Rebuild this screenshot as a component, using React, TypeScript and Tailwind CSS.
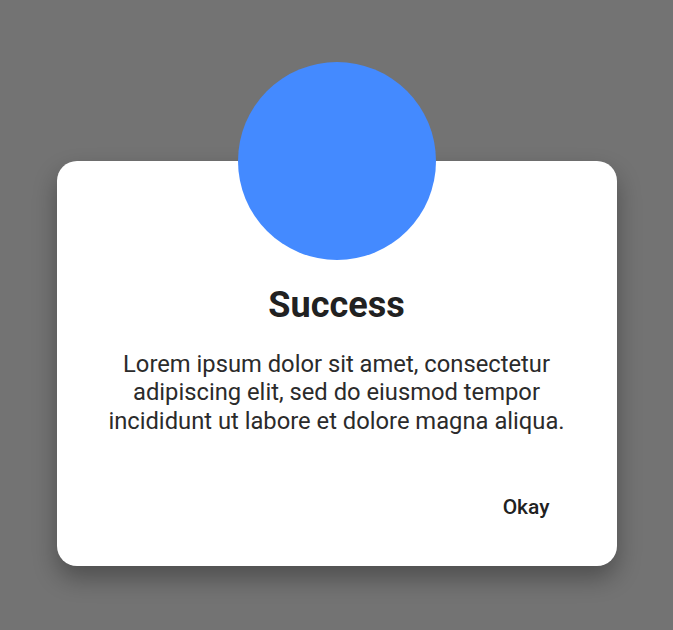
import React from "react";

export default function App() {
  return (
    <div
      className="flex min-h-[630px] w-full items-center justify-center bg-[#737373]"
      style={{ fontFamily: "Roboto, 'Noto Sans', sans-serif" }}
    >
      <div className="-mt-[2px] flex flex-col items-center">
        <div className="relative z-10 -mb-[99px] h-[198px] w-[198px] rounded-full bg-[#448AFF]" />
        <div className="flex w-[560px] flex-col rounded-[20px] bg-white px-10 pb-[37px] pt-[124px] shadow-[0_12px_24px_rgba(0,0,0,0.32)]">
          <h1 className="text-center text-[36px] font-bold leading-[40px] text-[#212121]">
            Success
          </h1>
          <p className="mt-[25px] text-center text-[23.75px] leading-[28.5px] text-[#2b2b2b]">
            Lorem ipsum dolor sit amet, consectetur adipiscing elit, sed do eiusmod tempor
            incididunt ut labore et dolore magna aliqua.
          </p>
          <div className="mt-[50px] flex justify-end">
            <button className="mr-[11px] rounded px-4 py-2 text-[21px] font-medium leading-7 text-[#212121]">
              Okay
            </button>
          </div>
        </div>
      </div>
    </div>
  );
}
